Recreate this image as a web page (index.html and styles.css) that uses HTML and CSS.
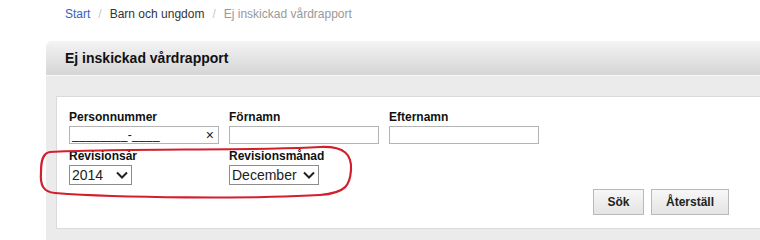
FILE: index.html
```html
<!DOCTYPE html>
<html lang="sv">
<head>
<meta charset="utf-8">
<title>Ej inskickad vårdrapport</title>
<link rel="stylesheet" href="styles.css">
</head>
<body>
<nav class="breadcrumb">
  <a class="crumb-link" href="#">Start</a>
  <span class="sep">/</span>
  <span class="crumb">Barn och ungdom</span>
  <span class="sep">/</span>
  <span class="crumb-current">Ej inskickad vårdrapport</span>
</nav>

<section class="panel">
  <header class="panel-header">Ej inskickad vårdrapport</header>
  <div class="panel-body">
    <div class="form-box">
      <div class="form">
        <div class="row">
          <div class="field">
            <label class="label">Personnummer</label>
            <div class="input pnr"><span class="mask">________-____</span><span class="clear">×</span></div>
          </div>
          <div class="field">
            <label class="label">Förnamn</label>
            <div class="input"></div>
          </div>
          <div class="field">
            <label class="label">Efternamn</label>
            <div class="input"></div>
          </div>
        </div>
        <div class="row row2">
          <div class="field">
            <label class="label">Revisionsår</label>
            <div class="select sel-year"><span>2014</span>
              <svg class="chev" width="12" height="8" viewBox="0 0 12 8"><path d="M1 1.5 L6 6.5 L11 1.5" fill="none" stroke="#222" stroke-width="2"/></svg>
            </div>
          </div>
          <div class="field">
            <label class="label">Revisionsmånad</label>
            <div class="select sel-month"><span>December</span>
              <svg class="chev" width="12" height="8" viewBox="0 0 12 8"><path d="M1 1.5 L6 6.5 L11 1.5" fill="none" stroke="#222" stroke-width="2"/></svg>
            </div>
          </div>
        </div>
        <div class="actions">
          <button class="btn btn-search">Sök</button>
          <button class="btn btn-reset">Återställ</button>
        </div>
      </div>
    </div>
  </div>
</section>

<svg class="annotation" width="760" height="240" viewBox="0 0 760 240">
  <path d="M50 152 C120 148, 250 151, 320 147 C345 146, 352 155, 351 170 C350 185, 346 193, 320 195 C250 199, 120 198, 55 193 C43 192, 40 185, 41 172 C41 160, 43 153, 50 152 Z" fill="none" stroke="#d21f2c" stroke-width="2.2"/>
</svg>
</body>
</html>
```

FILE: styles.css
```css
html, body {
  margin: 0;
  padding: 0;
  background: #ffffff;
  font-family: "Liberation Sans", Arial, sans-serif;
  color: #222;
  overflow: hidden;
}

body {
  position: relative;
  width: 760px;
  height: 240px;
}

.breadcrumb {
  padding: 6px 0 0 65px;
  height: 16px;
  line-height: 16px;
  font-size: 12px;
  display: flex;
  gap: 8px;
}

.crumb-link {
  color: #3560c4;
  text-decoration: none;
}

.sep {
  color: #c8c8c8;
}

.crumb {
  color: #333;
}

.crumb-current {
  color: #999;
}

.panel {
  margin: 19px 0 0 46px;
  background: #ebebeb;
  border-top-left-radius: 6px;
  height: 200px;
}

.panel-header {
  height: 34px;
  line-height: 34px;
  padding-left: 19px;
  font-size: 14px;
  font-weight: bold;
  color: #111;
  background: linear-gradient(#f4f4f4, #d5d5d5);
  border-top-left-radius: 6px;
  border-bottom: 1px solid #f8f8f8;
}

.panel-body {
  padding: 20px 0 0 10px;
}

.form-box {
  background: #ffffff;
  border: 1px solid #dadada;
  border-right: none;
  height: 133px;
  padding: 13px 0 0 12px;
  box-sizing: border-box;
}

.form {
  width: 660px;
}

.row {
  display: flex;
  gap: 10px;
}

.row2 {
  margin-top: 5px;
}

.field {
  width: 150px;
  display: flex;
  flex-direction: column;
}

.label {
  font-size: 12px;
  font-weight: bold;
  line-height: 15px;
  height: 15px;
  margin-bottom: 1px;
  color: #111;
}

.input {
  width: 150px;
  height: 18px;
  box-sizing: border-box;
  border: 1px solid #b4b4b4;
  background: #fff;
}

.pnr {
  display: flex;
  align-items: center;
  justify-content: space-between;
  padding: 0 4px 0 2px;
  font-size: 12px;
  line-height: 16px;
  color: #111;
}

.mask {
  letter-spacing: 0.3px;
  margin-top: -1px;
}

.clear {
  font-size: 14px;
  color: #222;
}

.select {
  height: 20px;
  box-sizing: border-box;
  border: 1px solid #8c8c8c;
  background: #fff;
  display: flex;
  align-items: center;
  justify-content: space-between;
  padding: 0 3px 0 2px;
  font-size: 14px;
  color: #222;
}

.sel-year {
  width: 63px;
}

.sel-month {
  width: 90px;
}

.chev {
  display: block;
}

.actions {
  display: flex;
  justify-content: flex-end;
  gap: 7px;
  margin-top: 4px;
}

.btn {
  height: 26px;
  box-sizing: border-box;
  border: 1px solid #b9b9b9;
  background: linear-gradient(#f7f7f7, #e4e4e4);
  font-family: "Liberation Sans", Arial, sans-serif;
  font-size: 12px;
  font-weight: bold;
  color: #222;
  padding: 0;
}

.btn-search {
  width: 51px;
}

.btn-reset {
  width: 78px;
}

.annotation {
  position: absolute;
  left: 0;
  top: 0;
  pointer-events: none;
}
```
